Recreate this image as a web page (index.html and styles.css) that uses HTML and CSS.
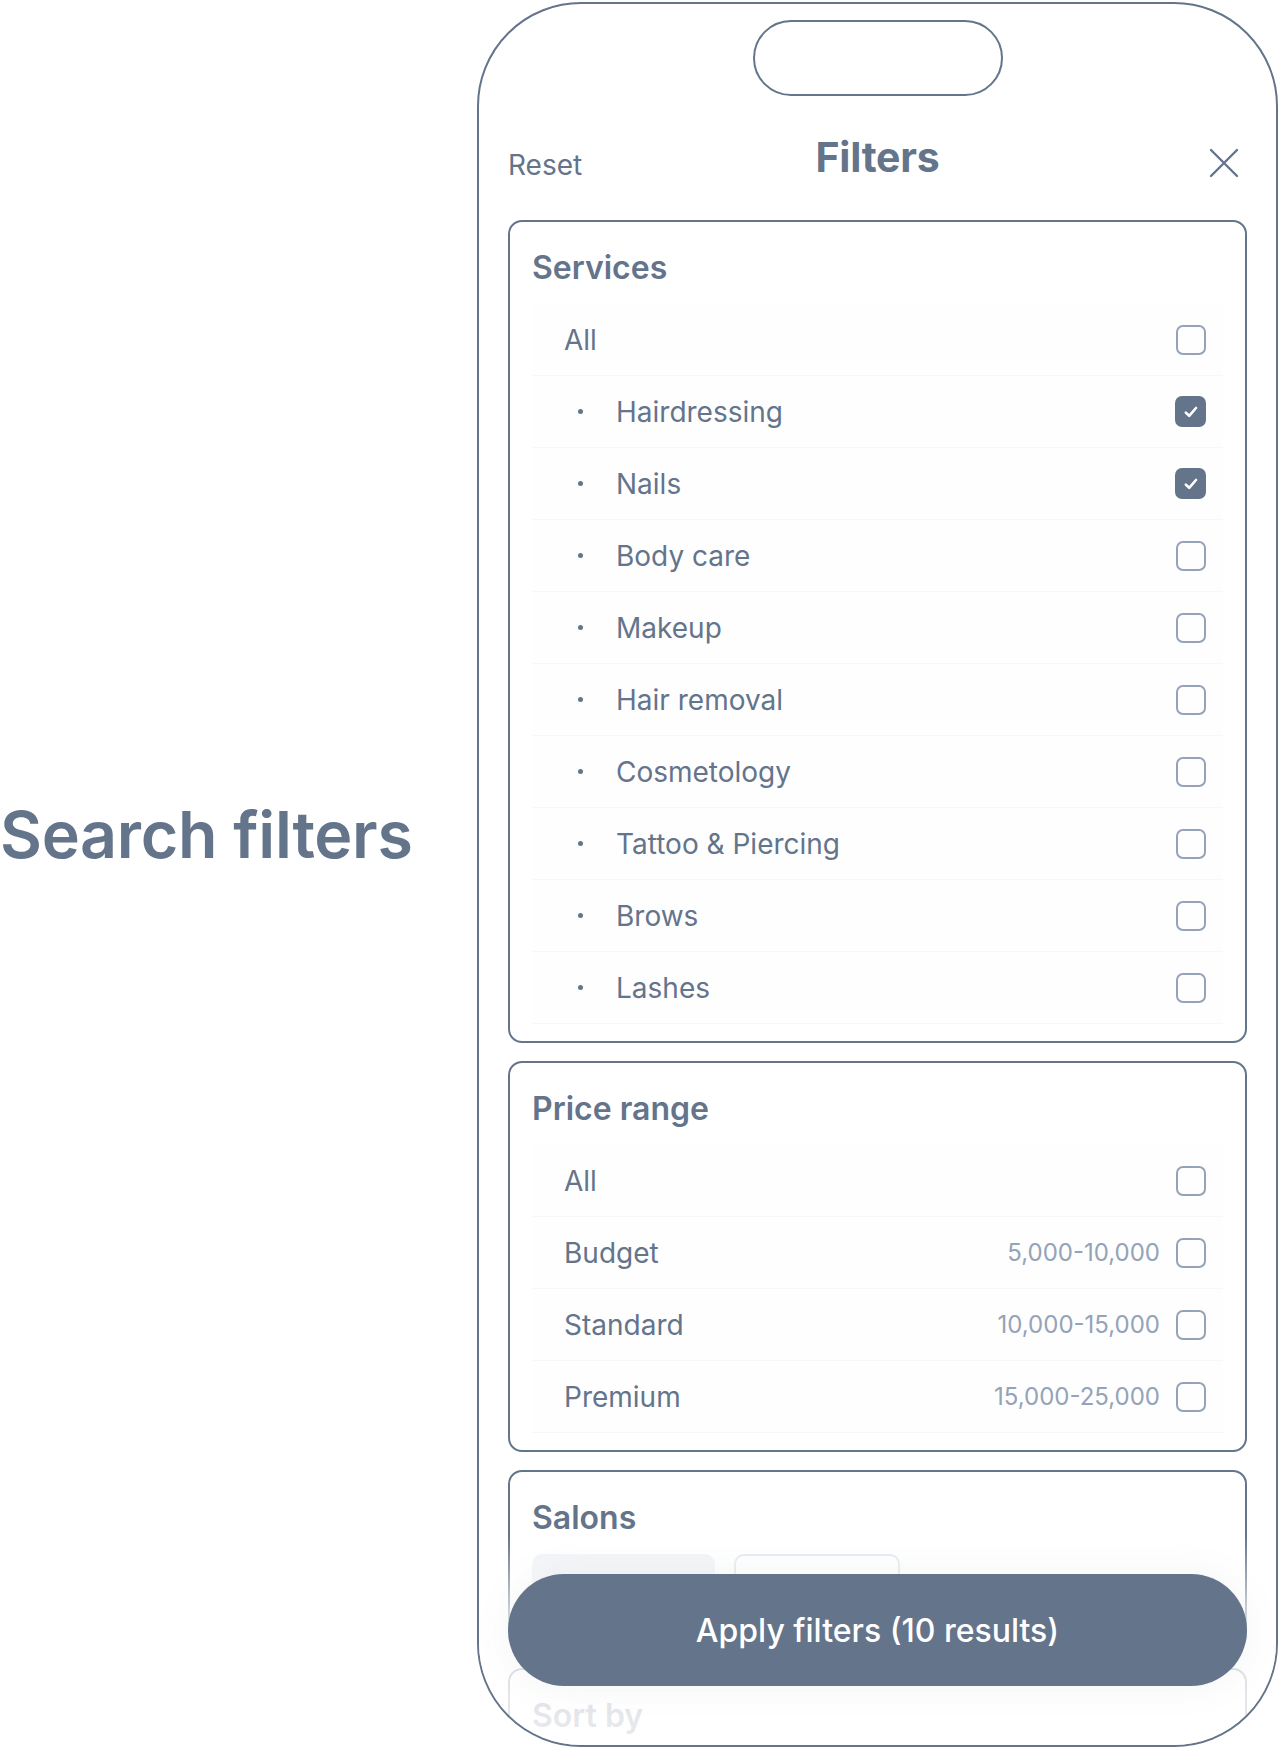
FILE: index.html
```html
<!DOCTYPE html>
<html lang="en">
<head>
<meta charset="utf-8">
<title>Search filters</title>
<link rel="stylesheet" href="styles.css">
</head>
<body>
<div class="page">
  <div class="intro">
    <h1 class="intro-title">Search filters</h1>
  </div>
  <div class="phone">
    <div class="notch"></div>
    <header class="sheet-header">
      <span class="reset">Reset</span>
      <h2 class="sheet-title">Filters</h2>
      <span class="close">
        <svg width="30" height="30" viewBox="0 0 30 30" fill="none" stroke="#64748b" stroke-width="2.4" stroke-linecap="round"><path d="M2 2 L28 28 M28 2 L2 28"/></svg>
      </span>
    </header>
    <div class="sheet-body">
      <section class="card">
        <h3 class="card-title">Services</h3>
        <ul class="options">
          <li class="option"><span class="label">All</span><span class="box"></span></li>
          <li class="option sub"><span class="bullet"></span><span class="label">Hairdressing</span><span class="box checked"><svg width="18" height="18" viewBox="0 0 18 18" fill="none" stroke="#fff" stroke-width="2.6" stroke-linecap="round" stroke-linejoin="round"><path d="M3.8 9.6 L7.2 12.8 L14 5"/></svg></span></li>
          <li class="option sub"><span class="bullet"></span><span class="label">Nails</span><span class="box checked"><svg width="18" height="18" viewBox="0 0 18 18" fill="none" stroke="#fff" stroke-width="2.6" stroke-linecap="round" stroke-linejoin="round"><path d="M3.8 9.6 L7.2 12.8 L14 5"/></svg></span></li>
          <li class="option sub"><span class="bullet"></span><span class="label">Body care</span><span class="box"></span></li>
          <li class="option sub"><span class="bullet"></span><span class="label">Makeup</span><span class="box"></span></li>
          <li class="option sub"><span class="bullet"></span><span class="label">Hair removal</span><span class="box"></span></li>
          <li class="option sub"><span class="bullet"></span><span class="label">Cosmetology</span><span class="box"></span></li>
          <li class="option sub"><span class="bullet"></span><span class="label">Tattoo &amp; Piercing</span><span class="box"></span></li>
          <li class="option sub"><span class="bullet"></span><span class="label">Brows</span><span class="box"></span></li>
          <li class="option sub"><span class="bullet"></span><span class="label">Lashes</span><span class="box"></span></li>
        </ul>
      </section>
      <section class="card">
        <h3 class="card-title">Price range</h3>
        <ul class="options">
          <li class="option"><span class="label">All</span><span class="box"></span></li>
          <li class="option"><span class="label">Budget</span><span class="price">5,000-10,000</span><span class="box"></span></li>
          <li class="option"><span class="label">Standard</span><span class="price">10,000-15,000</span><span class="box"></span></li>
          <li class="option"><span class="label">Premium</span><span class="price">15,000-25,000</span><span class="box"></span></li>
        </ul>
      </section>
      <section class="card card-salons">
        <h3 class="card-title">Salons</h3>
        <div class="chips">
          <span class="chip chip-filled"></span>
          <span class="chip chip-outline"></span>
        </div>
      </section>
      <section class="card">
        <h3 class="card-title">Sort by</h3>
      </section>
    </div>
    <div class="fade"></div>
    <button class="apply">Apply filters (10 results)</button>
  </div>
</div>
</body>
</html>
```

FILE: styles.css
```css
* { box-sizing: border-box; }

html, body {
  margin: 0;
  padding: 0;
  background: #ffffff;
}

body {
  font-family: Inter, "Noto Sans", "Liberation Sans", sans-serif;
  color: #64748b;
  width: 1280px;
  height: 1749px;
  overflow: hidden;
}

.page {
  display: flex;
  align-items: flex-start;
}

.intro {
  flex: 0 0 477px;
  padding-top: 795px;
}

.intro-title {
  margin: 0;
  font-size: 64.5px;
  line-height: 80px;
  font-weight: 600;
  letter-spacing: -0.3px;
  color: #64748b;
  white-space: nowrap;
}

.phone {
  position: relative;
  margin-top: 2px;
  width: 801px;
  height: 1745px;
  border: 2px solid #64748b;
  border-radius: 104px;
  overflow: hidden;
  padding: 0 29px;
  display: flex;
  flex-direction: column;
}

.notch {
  align-self: center;
  margin-top: 16px;
  width: 250px;
  height: 76px;
  border: 2px solid #64748b;
  border-radius: 38px;
  flex: 0 0 auto;
}

.sheet-header {
  margin-top: 36px;
  height: 48px;
  display: grid;
  grid-template-columns: 1fr auto 1fr;
  align-items: center;
  flex: 0 0 auto;
}

.reset {
  font-size: 28px;
  line-height: 34px;
  padding-top: 16px;
  color: #64748b;
}

.sheet-title {
  margin: 0;
  font-size: 41px;
  line-height: 48px;
  font-weight: 700;
  color: #64748b;
  letter-spacing: -0.2px;
}

.close {
  justify-self: end;
  display: flex;
  margin-right: 8px;
  padding-top: 12px;
}

.sheet-body {
  margin-top: 40px;
  display: flex;
  flex-direction: column;
  gap: 18px;
}

.card {
  border: 2px solid #64748b;
  border-radius: 14px;
  padding: 22px 22px 17px;
}

.card-title {
  margin: 0 0 12px 0;
  font-size: 32px;
  line-height: 48px;
  font-weight: 600;
  color: #64748b;
}

.options {
  list-style: none;
  margin: 0;
  padding: 0;
}

.option {
  display: flex;
  align-items: center;
  height: 72px;
  padding: 0 17px 0 32px;
  border-bottom: 1px solid #f5f7f9;
  background: #fefefe;
  font-size: 28px;
}

.option.sub {
  padding-left: 46px;
}

.bullet {
  width: 5px;
  height: 5px;
  border-radius: 50%;
  background: #64748b;
  margin-right: 33px;
  flex: 0 0 auto;
}

.label {
  flex: 1 1 auto;
  color: #64748b;
}

.price {
  font-size: 24px;
  color: #94a3b8;
  margin-right: 16px;
}

.box {
  width: 30px;
  height: 30px;
  border: 2px solid #94a3b8;
  border-radius: 7px;
  flex: 0 0 auto;
  display: flex;
  align-items: center;
  justify-content: center;
}

.box.checked {
  width: 31px;
  height: 31px;
  background: #64748b;
  border-color: #64748b;
}

.card-salons {
  padding-bottom: 30px;
}

.chips {
  display: flex;
  gap: 19px;
}

.chip {
  height: 64px;
  border-radius: 10px;
}

.chip-filled {
  width: 183px;
  background: #f1f3f6;
}

.chip-outline {
  width: 166px;
  border: 2px solid #e2e8f0;
}

.fade {
  position: absolute;
  left: 0;
  right: 0;
  bottom: 0;
  height: 210px;
  background: linear-gradient(to bottom, rgba(255,255,255,0) 0%, rgba(255,255,255,0.75) 40%, rgba(255,255,255,0.85) 100%);
  pointer-events: none;
}

.apply {
  position: absolute;
  left: 29px;
  right: 29px;
  bottom: 59px;
  height: 112px;
  border: none;
  border-radius: 56px;
  background: #64748b;
  color: #ffffff;
  font-family: Inter, "Noto Sans", "Liberation Sans", sans-serif;
  font-size: 32px;
  font-weight: 500;
  box-shadow: 0 0 36px rgba(100, 116, 139, 0.08);
}
```
